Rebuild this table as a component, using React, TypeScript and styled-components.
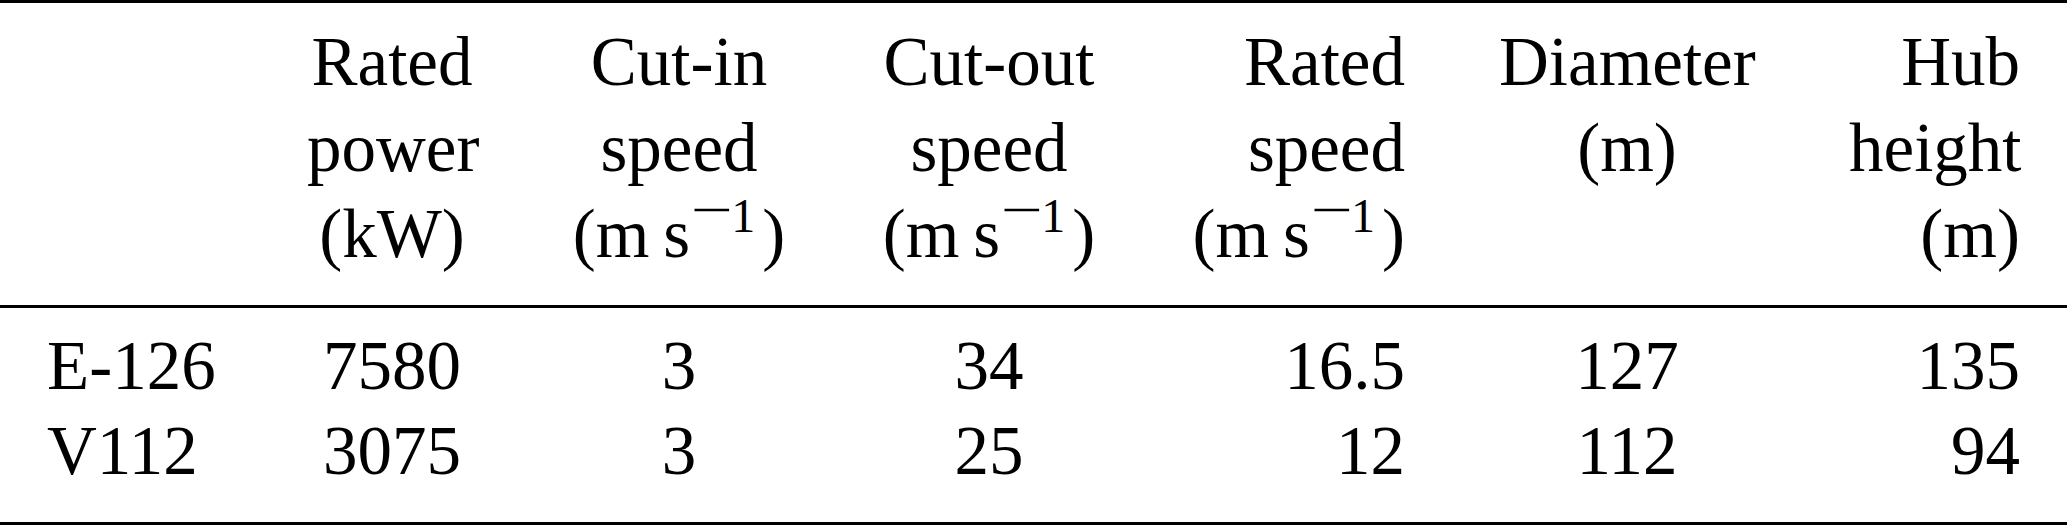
import React from 'react';
import styled, { createGlobalStyle } from 'styled-components';

interface IColumn {
  label: string[];
  align: 'left' | 'center' | 'right';
  width: number;
  unit?: 'speed';
}

interface ITurbine {
  name: string;
  values: string[];
}

const columns: IColumn[] = [
  { label: [], align: 'left', width: 260 },
  { label: ['Rated', 'power', '(kW)'], align: 'center', width: 264 },
  { label: ['Cut-in', 'speed'], align: 'center', width: 310, unit: 'speed' },
  { label: ['Cut-out', 'speed'], align: 'center', width: 310, unit: 'speed' },
  { label: ['Rated', 'speed'], align: 'right', width: 308, unit: 'speed' },
  { label: ['Diameter', '(m)'], align: 'center', width: 350 },
  { label: ['Hub', 'height', '(m)'], align: 'right', width: 265 },
];

const turbines: ITurbine[] = [
  { name: 'E-126', values: ['7580', '3', '34', '16.5', '127', '135'] },
  { name: 'V112', values: ['3075', '3', '25', '12', '112', '94'] },
];

const SpeedUnit: React.FC = () => (
  <Line>
    (m{'\u2009'}s
    <Sup>
      <Minus>−</Minus>1
    </Sup>
    )
  </Line>
);

const App: React.FC = () => {
  return (
    <>
      <GlobalStyle />
      <Table>
        <colgroup>
          {columns.map((col, i) => (
            <Col key={i} $width={col.width} />
          ))}
        </colgroup>
        <thead>
          <tr>
            {columns.map((col, i) => (
              <HeadCell key={i} $align={col.align}>
                {col.label.map(text => (
                  <Line key={text}>{text}</Line>
                ))}
                {col.unit === 'speed' && <SpeedUnit />}
              </HeadCell>
            ))}
          </tr>
        </thead>
        <tbody>
          {turbines.map(t => (
            <BodyRow key={t.name}>
              <Cell $align="left">{t.name}</Cell>
              {t.values.map((v, i) => (
                <Cell key={i} $align={columns[i + 1].align}>
                  {v}
                </Cell>
              ))}
            </BodyRow>
          ))}
        </tbody>
      </Table>
    </>
  );
};

const GlobalStyle = createGlobalStyle`
  body {
    margin: 0;
    background: #fff;
    color: #000;
    font-family: 'Liberation Serif', 'Times New Roman', serif;
  }
`;

const Table = styled.table`
  width: 2067px;
  table-layout: fixed;
  border-collapse: collapse;
  border-top: 3px solid #000;
  border-bottom: 3px solid #000;
  font-size: 69px;
`;

const Col = styled.col<{ $width: number }>`
  width: ${p => p.$width}px;
`;

const HeadCell = styled.th<{ $align: string }>`
  font-weight: normal;
  vertical-align: top;
  text-align: ${p => p.$align};
  padding: 16px 47px 28px;
  border-bottom: 3px solid #000;
  white-space: nowrap;
`;

const Line = styled.div`
  line-height: 86px;
  height: 86px;
`;

const Sup = styled.span`
  font-size: 48px;
  line-height: 0;
  vertical-align: 25px;
  margin-left: 2px;
  margin-right: 7px;
`;

const Minus = styled.span`
  display: inline-block;
  transform: translateY(-6px) scaleX(1.55);
  margin: 0 6px;
`;

const BodyRow = styled.tr`
  &:first-child td {
    padding-top: 16px;
  }
  &:last-child td {
    padding-bottom: 28px;
  }
`;

const Cell = styled.td<{ $align: string }>`
  text-align: ${p => p.$align};
  line-height: 85px;
  padding: 0 47px;
  white-space: nowrap;
`;

export default App;
